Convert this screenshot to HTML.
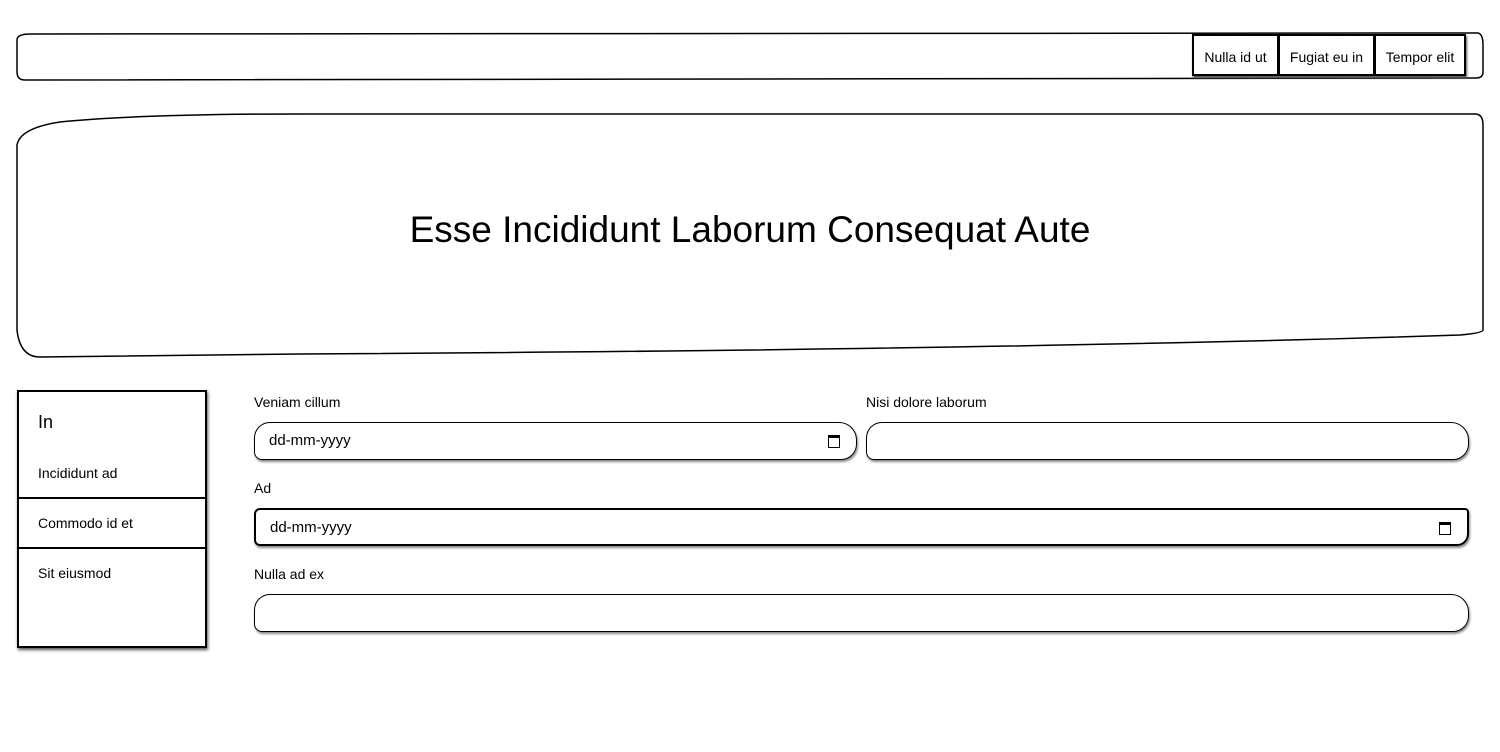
<!DOCTYPE html>
<html><head><style>
body{margin:0;width:1500px;height:752px;background:#fff;position:relative;font-family:"Liberation Sans",sans-serif;color:#000;overflow:hidden}
.a{position:absolute}
.btn{position:absolute;top:34px;height:42px;border:2px solid #000;box-shadow:1px 2px 2px #555;font-size:14px;line-height:42px;text-align:center;box-sizing:border-box;background:#fff}
.lbl{position:absolute;font-size:14px}
.fld{position:absolute;height:38px;border:1.5px solid #000;border-radius:16px 18px 16px 8px;box-shadow:1px 2px 2px #888;box-sizing:border-box;font-size:15px;line-height:36px;padding-left:14px}
</style></head><body>
<svg class="a" style="left:0;top:0" width="1500" height="752">
<path d="M17 40 Q17 34 30 34 L1478 33 Q1483 34 1483 45 L1483 72 Q1483 78 1476 78 L25 80 Q17 80 17 72 Z" fill="none" stroke="#000" stroke-width="1.5"/>
<path d="M17 145 Q20 128 60 122 Q140 114 300 114 L1475 114 Q1483 114 1483 125 L1483 330 Q1483 333 1460 335 Q1000 350 300 354 L40 357 Q20 357 17 330 Z" fill="none" stroke="#000" stroke-width="1.5"/>
</svg>
<div class="btn" style="left:1192px;width:87px">Nulla id ut</div>
<div class="btn" style="left:1278px;width:97px">Fugiat eu in</div>
<div class="btn" style="left:1374px;width:92px">Tempor elit</div>
<div class="a" style="left:0;width:1500px;top:209px;text-align:center;font-size:37px">Esse Incididunt Laborum Consequat Aute</div>
<div class="a" style="left:17px;top:390px;width:190px;height:258px;border:2px solid #000;box-sizing:border-box;box-shadow:1px 2px 3px #555">
<div class="a" style="left:19px;top:20px;font-size:18px">In</div>
<div class="a" style="left:19px;top:73px;font-size:14px">Incididunt ad</div>
<div class="a" style="left:0;top:105px;width:186px;border-top:2px solid #000"></div>
<div class="a" style="left:19px;top:123px;font-size:14px">Commodo id et</div>
<div class="a" style="left:0;top:155px;width:186px;border-top:2px solid #000"></div>
<div class="a" style="left:19px;top:173px;font-size:14px">Sit eiusmod</div>
</div>
<div class="lbl" style="left:254px;top:394px">Veniam cillum</div>
<div class="lbl" style="left:866px;top:394px">Nisi dolore laborum</div>
<div class="fld" style="left:254px;top:422px;width:603px">dd-mm-yyyy<span class="a" style="right:16px;top:12px;width:10px;height:9px;border:1.5px solid #000;border-top-width:3px;line-height:0"></span></div>
<div class="fld" style="left:866px;top:422px;width:603px"></div>
<div class="lbl" style="left:254px;top:480px">Ad</div>
<div class="fld" style="left:254px;top:508px;width:1215px;border-width:2px;border-radius:6px 4px 12px 6px">dd-mm-yyyy<span class="a" style="right:16px;top:12px;width:10px;height:9px;border:1.5px solid #000;border-top-width:3px;line-height:0"></span></div>
<div class="lbl" style="left:254px;top:566px">Nulla ad ex</div>
<div class="fld" style="left:254px;top:594px;width:1215px"></div>
</body></html>
